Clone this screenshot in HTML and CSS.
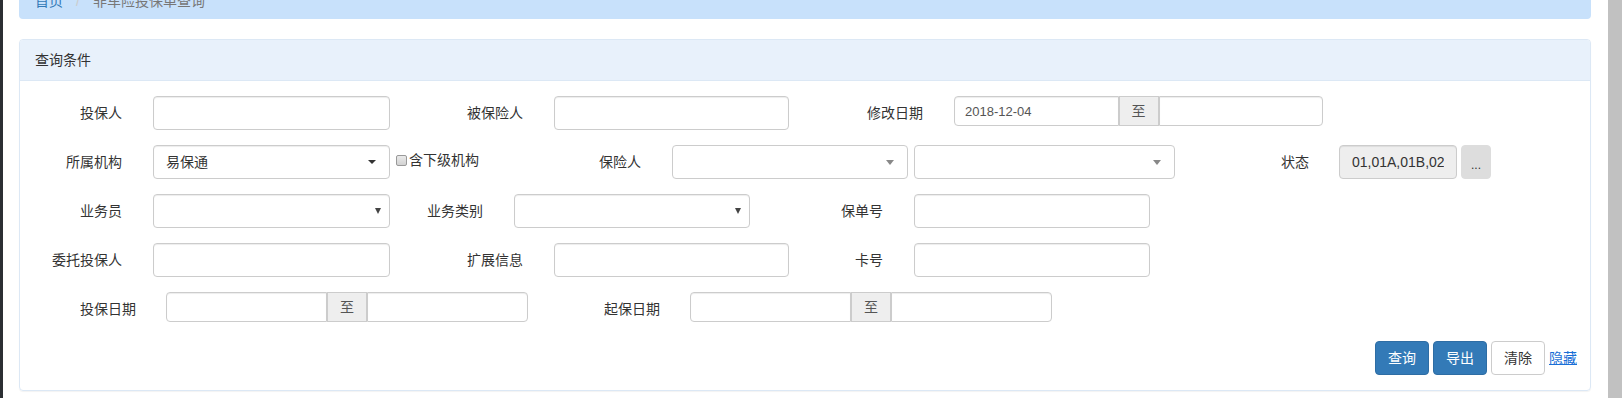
FILE: index.html
```html
<!DOCTYPE html>
<html lang="zh-CN">
<head>
    <meta charset="UTF-8">
    <meta name="viewport" content="width=device-width, initial-scale=1.0">
    <title>非车险投保单查询</title>
    <link rel="stylesheet" href="styles.css">
</head>
<body>
    <div class="frame-edge"></div>
    <div class="page">
        <ol class="breadcrumb">
            <li><a href="#">首页</a></li>
            <li class="active">非车险投保单查询</li>
        </ol>

        <div class="panel">
            <div class="panel-heading">查询条件</div>
            <div class="panel-body">
                <div class="form-row">
                    <label class="lbl w118">投保人</label>
                    <input class="form-control w237" type="text">
                    <label class="lbl w164">被保险人</label>
                    <input class="form-control w235" type="text">
                    <label class="lbl w165">修改日期</label>
                    <div class="date-range w369">
                        <input class="form-control" type="text" value="2018-12-04">
                        <span class="addon">至</span>
                        <input class="form-control" type="text">
                    </div>
                </div>

                <div class="form-row">
                    <label class="lbl w118">所属机构</label>
                    <div class="form-control picker w237">
                        <span>易保通</span>
                        <span class="caret"></span>
                    </div>
                    <label class="check-inline"><input type="checkbox">含下级机构</label>
                    <label class="lbl w195">保险人</label>
                    <div class="select2 w236"><span class="select2-arrow"></span></div>
                    <div class="select2 w261 ml6"><span class="select2-arrow"></span></div>
                    <label class="lbl w164 pr30">状态</label>
                    <input class="form-control w118 state" type="text" value="01,01A,01B,02" readonly>
                    <button class="btn-more">...</button>
                </div>

                <div class="form-row">
                    <label class="lbl w118">业务员</label>
                    <div class="select-wrap w237">
                        <select class="form-control"><option></option></select>
                    </div>
                    <label class="lbl w124">业务类别</label>
                    <div class="select-wrap w236">
                        <select class="form-control"><option></option></select>
                    </div>
                    <label class="lbl w164">保单号</label>
                    <input class="form-control w236" type="text">
                </div>

                <div class="form-row">
                    <label class="lbl w118">委托投保人</label>
                    <input class="form-control w237" type="text">
                    <label class="lbl w164">扩展信息</label>
                    <input class="form-control w235" type="text">
                    <label class="lbl w125">卡号</label>
                    <input class="form-control w236" type="text">
                </div>

                <div class="form-row">
                    <label class="lbl w131 pr30">投保日期</label>
                    <div class="date-range w362">
                        <input class="form-control" type="text">
                        <span class="addon">至</span>
                        <input class="form-control" type="text">
                    </div>
                    <label class="lbl w162 pr30">起保日期</label>
                    <div class="date-range w362">
                        <input class="form-control" type="text">
                        <span class="addon">至</span>
                        <input class="form-control" type="text">
                    </div>
                </div>

                <div class="actions">
                    <button class="btn btn-primary">查询</button>
                    <button class="btn btn-primary">导出</button>
                    <button class="btn btn-default">清除</button>
                    <a href="#" class="toggle-link">隐藏</a>
                </div>
            </div>
        </div>
    </div>
    <div class="scrollbar"></div>
</body>
</html>
```

FILE: styles.css
```css
* {
    box-sizing: border-box;
}
html, body {
    margin: 0;
    height: 100%;
}
body {
    display: flex;
    overflow: hidden;
    font-family: "Liberation Sans", "Noto Sans CJK SC", sans-serif;
    font-size: 14px;
    line-height: 20px;
    color: #333;
    background-color: #fff;
}
.frame-edge {
    width: 3px;
    flex-shrink: 0;
    background-color: #2b2f33;
}
.scrollbar {
    width: 14px;
    flex-shrink: 0;
    background-color: #c1c1c1;
}
.page {
    flex: 1;
    padding: 0 17px 0 16px;
}

/* breadcrumb (page is scrolled a little, so it is cut at the top) */
.breadcrumb {
    display: flex;
    list-style: none;
    margin: -17px 0 20px;
    padding: 8px 16px;
    background-color: #c8e1fb;
    border-radius: 4px;
}
.breadcrumb a {
    color: #337ab7;
    text-decoration: none;
}
.breadcrumb li + li::before {
    content: "/";
    padding: 0 13px;
    color: #ccc;
}
.breadcrumb .active {
    color: #777;
}

/* panel */
.panel {
    border: 1px solid #dce8f5;
    border-radius: 4px;
    box-shadow: 0 1px 1px rgba(0, 0, 0, 0.05);
}
.panel-heading {
    padding: 10px 15px;
    background-color: #e8f1fb;
    border-bottom: 1px solid #dce8f5;
    border-radius: 3px 3px 0 0;
}
.panel-body {
    padding: 15px;
}

/* form rows */
.form-row {
    display: flex;
    align-items: flex-start;
    height: 34px;
    margin-bottom: 15px;
}
.lbl {
    flex-shrink: 0;
    padding: 7px 31px 0 0;
    text-align: right;
    font-weight: normal;
    white-space: nowrap;
}
.lbl.pr30 {
    padding-right: 30px;
}
.w118 { width: 118px; }
.w124 { width: 124px; }
.w125 { width: 125px; }
.w131 { width: 131px; }
.w162 { width: 162px; }
.w164 { width: 164px; }
.w165 { width: 165px; }
.w195 { width: 195px; }
.w235 { width: 235px; }
.w236 { width: 236px; }
.w237 { width: 237px; }
.w261 { width: 261px; }
.w362 { width: 362px; }
.w369 { width: 369px; }
.ml6 { margin-left: 6px; }

.form-control {
    flex-shrink: 0;
    height: 34px;
    padding: 6px 12px;
    font: inherit;
    color: #555;
    background-color: #fff;
    border: 1px solid #ccc;
    border-radius: 4px;
    box-shadow: inset 0 1px 1px rgba(0, 0, 0, 0.075);
}
.form-control.state {
    background-color: #eee;
    color: #333;
}

/* bootstrap-select style picker */
.picker {
    display: flex;
    align-items: center;
    justify-content: space-between;
    color: #333;
    padding-right: 13px;
}
.caret {
    width: 0;
    height: 0;
    border-top: 4px solid #333;
    border-left: 4px solid transparent;
    border-right: 4px solid transparent;
}

/* select2 style box */
.select2 {
    display: flex;
    align-items: center;
    justify-content: flex-end;
    flex-shrink: 0;
    height: 34px;
    padding-right: 13px;
    border: 1px solid #ccc;
    border-radius: 4px;
    background-color: #fff;
}
.select2-arrow {
    width: 0;
    height: 0;
    border-top: 5px solid #888;
    border-left: 4px solid transparent;
    border-right: 4px solid transparent;
}

/* plain select with the small arrow */
.select-wrap {
    position: relative;
    flex-shrink: 0;
}
.select-wrap select {
    width: 100%;
    appearance: none;
    -webkit-appearance: none;
}
.select-wrap::after {
    content: "";
    position: absolute;
    right: 9px;
    top: 14px;
    border-top: 6px solid #444;
    border-left: 3px solid transparent;
    border-right: 3px solid transparent;
}

.check-inline {
    display: flex;
    align-items: center;
    flex-shrink: 0;
    width: 87px;
    padding: 5px 0 0 6px;
    font-weight: normal;
    white-space: nowrap;
}
.check-inline input {
    flex-shrink: 0;
    appearance: none;
    -webkit-appearance: none;
    width: 11px;
    height: 11px;
    margin: 0 2px 0 0;
    background: linear-gradient(#eaeaea, #d2d2d2);
    border: 1px solid #999;
    border-radius: 2px;
}

.btn-more {
    flex-shrink: 0;
    width: 30px;
    height: 34px;
    margin-left: 4px;
    padding: 6px 0 0;
    font: inherit;
    font-size: 12px;
    color: #333;
    background-color: #ddd;
    border: 1px solid #ddd;
    border-radius: 4px;
}

/* date range */
.date-range {
    display: flex;
    flex-shrink: 0;
    height: 30px;
}
.date-range .form-control {
    flex: 1;
    min-width: 0;
    height: 30px;
    padding: 5px 10px;
    font-size: 13px;
}
.date-range .form-control:first-child {
    border-radius: 4px 0 0 4px;
}
.date-range .form-control:last-child {
    border-radius: 0 4px 4px 0;
}
.addon {
    width: 40px;
    flex-shrink: 0;
    padding-top: 4px;
    text-align: center;
    color: #555;
    background-color: #eee;
    border: 1px solid #ccc;
}

/* buttons */
.actions {
    display: flex;
    justify-content: flex-end;
    align-items: center;
    gap: 4px;
    margin-right: -2px;
}
.btn {
    width: 54px;
    height: 34px;
    padding: 6px 12px;
    font: inherit;
    border: 1px solid transparent;
    border-radius: 4px;
    cursor: pointer;
}
.btn-primary {
    color: #fff;
    background-color: #337ab7;
    border-color: #2e6da4;
}
.btn-default {
    color: #333;
    background-color: #fff;
    border-color: #ccc;
}
.toggle-link {
    color: #1a6fd6;
    text-decoration: underline;
}
```
